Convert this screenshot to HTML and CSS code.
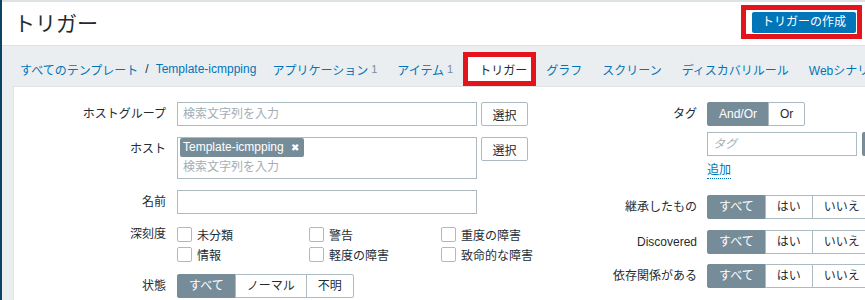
FILE: index.html
```html
<!DOCTYPE html>
<html lang="ja">
  <head>
    <meta charset="UTF-8" />
    <meta name="viewport" content="width=device-width, initial-scale=1.0" />
    <title>トリガー</title>
    <link rel="stylesheet" href="styles.css">
  </head>
  <body>
    <div class="stripe"></div>

    <div class="page">
      <header class="header">
        <h1 class="title">トリガー</h1>
        <div class="mark mark-create">
          <button class="btn-primary">トリガーの作成</button>
        </div>
      </header>

      <nav class="nav">
        <div class="crumbs">
          <a href="#">すべてのテンプレート</a>
          <span class="sep">/</span>
          <a href="#">Template-icmpping</a>
        </div>
        <a class="tab" href="#">アプリケーション <span class="count">1</span></a>
        <a class="tab" href="#">アイテム <span class="count">1</span></a>
        <span class="tab tab-active mark">トリガー</span>
        <a class="tab" href="#">グラフ</a>
        <a class="tab" href="#">スクリーン</a>
        <a class="tab" href="#">ディスカバリルール</a>
        <a class="tab" href="#">Webシナリオ</a>
      </nav>

      <div class="panel">
        <!-- left filter column -->
        <div class="filter-col filter-left">
          <div class="row">
            <label class="row-label">ホストグループ</label>
            <div class="row-field">
              <input class="text-input" type="text" placeholder="検索文字列を入力">
              <button class="btn-alt">選択</button>
            </div>
          </div>

          <div class="row row-gap-11">
            <label class="row-label">ホスト</label>
            <div class="row-field">
              <div class="multiselect">
                <span class="chip">Template-icmpping <span class="chip-x">✖</span></span>
                <span class="ms-placeholder">検索文字列を入力</span>
              </div>
              <button class="btn-alt">選択</button>
            </div>
          </div>

          <div class="row row-gap-11">
            <label class="row-label">名前</label>
            <div class="row-field">
              <input class="text-input" type="text">
            </div>
          </div>

          <div class="row row-gap-10">
            <label class="row-label row-label-short">深刻度</label>
            <div class="checks">
              <label class="check"><span class="box"></span>未分類</label>
              <label class="check"><span class="box"></span>警告</label>
              <label class="check"><span class="box"></span>重度の障害</label>
              <label class="check"><span class="box"></span>情報</label>
              <label class="check"><span class="box"></span>軽度の障害</label>
              <label class="check"><span class="box"></span>致命的な障害</label>
            </div>
          </div>

          <div class="row row-gap-10">
            <label class="row-label">状態</label>
            <div class="seg">
              <span class="seg-item selected">すべて</span>
              <span class="seg-item">ノーマル</span>
              <span class="seg-item">不明</span>
            </div>
          </div>
        </div>

        <!-- right filter column -->
        <div class="filter-col filter-right">
          <div class="row">
            <label class="row-label">タグ</label>
            <div class="seg">
              <span class="seg-item selected">And/Or</span>
              <span class="seg-item">Or</span>
            </div>
          </div>

          <div class="row row-gap-6">
            <span class="row-label"></span>
            <div class="row-field">
              <input class="text-input tag-input" type="text" placeholder="タグ">
              <span class="tag-op"></span>
            </div>
          </div>

          <div class="row row-gap-6">
            <span class="row-label row-label-link"></span>
            <a class="link-add" href="#">追加</a>
          </div>

          <div class="row row-gap-16">
            <label class="row-label">継承したもの</label>
            <div class="seg">
              <span class="seg-item selected">すべて</span>
              <span class="seg-item">はい</span>
              <span class="seg-item">いいえ</span>
            </div>
          </div>

          <div class="row row-gap-11">
            <label class="row-label">Discovered</label>
            <div class="seg">
              <span class="seg-item selected">すべて</span>
              <span class="seg-item">はい</span>
              <span class="seg-item">いいえ</span>
            </div>
          </div>

          <div class="row row-gap-10">
            <label class="row-label">依存関係がある</label>
            <div class="seg">
              <span class="seg-item selected">すべて</span>
              <span class="seg-item">はい</span>
              <span class="seg-item">いいえ</span>
            </div>
          </div>
        </div>
      </div>
    </div>
  </body>
</html>
```

FILE: styles.css
```css
/* Global Styles */
body {
  margin: 0;
  display: flex;
  height: 300px;
  overflow: hidden;
  font-family: "Liberation Sans", "Noto Sans CJK JP", sans-serif;
  font-size: 12px;
  color: #1f2c33;
  background-color: #ebeef0;
}

a {
  color: #0275b8;
  text-decoration: none;
}

.stripe {
  width: 2px;
  flex-shrink: 0;
  background-color: #0c4264;
}

.page {
  flex: 1;
  min-width: 0;
  border-top: 2px solid #dde2e5;
  overflow: hidden;
}

/* Header */
.header {
  height: 43px;
  display: flex;
  justify-content: space-between;
  align-items: center;
  padding: 0 3px 0 12px;
  background-color: #fff;
  border-bottom: 1px solid #dfe4e7;
}

.title {
  margin: 0;
  font-size: 21px;
  font-weight: normal;
  line-height: 24px;
}

/* red highlight boxes */
.mark {
  border: 5px solid #e3141c;
}

.mark-create {
  align-self: flex-start;
  margin-top: 3px;
  padding: 2px 1px 1px 6px;
  background-color: #fff;
  display: flex;
}

.btn-primary {
  width: 104px;
  height: 21px;
  padding: 0;
  border: none;
  border-radius: 2px;
  background-color: #0275b8;
  color: #fff;
  font-family: inherit;
  font-size: 12px;
  line-height: 21px;
}

/* Navigation */
.nav {
  height: 40px;
  box-sizing: border-box;
  padding: 6px 0 0 18px;
  display: flex;
  white-space: nowrap;
}

.crumbs {
  display: flex;
  align-items: center;
  margin-right: 6px;
}

.crumbs .sep {
  margin: 0 7px;
  color: #1f2c33;
}

.tab {
  display: flex;
  align-items: center;
  padding: 0 10px;
}

.tab .count {
  margin-left: 3px;
  font-size: 11px;
  color: #768d99;
}

.tab-active {
  padding: 0 4px 0 11px;
  background-color: #fff;
  color: #1f2c33;
}

/* Filter panel */
.panel {
  margin-left: 11px;
  height: 220px;
  padding-top: 15px;
  box-sizing: border-box;
  background-color: #fff;
  border-top: 1px solid #dfe4e7;
  border-left: 1px solid #dfe4e7;
  display: flex;
  white-space: nowrap;
}

.filter-left {
  width: 566px;
  flex-shrink: 0;
}

.filter-right {
  flex-shrink: 0;
}

.row {
  display: flex;
  align-items: flex-start;
}

.row-gap-6 {
  margin-top: 6px;
}

.row-gap-10 {
  margin-top: 10px;
}

.row-gap-11 {
  margin-top: 11px;
}

.row-gap-16 {
  margin-top: 16px;
}

.row-label {
  width: 152px;
  margin-right: 11px;
  text-align: right;
  line-height: 24px;
  flex-shrink: 0;
}

.filter-right .row-label {
  width: 117px;
  margin-right: 10px;
}

.row-label-short {
  line-height: 20px;
}

.row-field {
  display: flex;
  align-items: flex-start;
}

.text-input {
  width: 300px;
  height: 24px;
  box-sizing: border-box;
  margin: 0;
  padding: 0 5px;
  border: 1px solid #acbbc2;
  font-family: inherit;
  font-size: 12px;
  color: #1f2c33;
}

.text-input::placeholder {
  color: #a3aeb4;
}

.tag-input {
  width: 150px;
}

.tag-input::placeholder {
  font-style: italic;
}

.tag-op {
  width: 60px;
  height: 24px;
  margin-left: 5px;
  border-radius: 2px;
  background-color: #768d99;
}

.btn-alt {
  height: 24px;
  width: 47px;
  margin-left: 4px;
  padding: 0;
  border: 1px solid #acbbc2;
  border-radius: 2px;
  background-color: #fff;
  font-family: inherit;
  font-size: 12px;
  color: #1f2c33;
}

.multiselect {
  width: 300px;
  height: 42px;
  box-sizing: border-box;
  border: 1px solid #acbbc2;
  padding: 0 0 0 2px;
  display: flex;
  flex-direction: column;
  align-items: flex-start;
}

.chip {
  height: 19px;
  line-height: 19px;
  padding: 0 5px 0 3px;
  border-radius: 2px;
  background-color: #768d99;
  color: #fff;
}

.chip-x {
  margin-left: 4px;
  font-size: 10px;
}

.ms-placeholder {
  padding-left: 3px;
  line-height: 21px;
  color: #a3aeb4;
}

/* severity checkboxes */
.checks {
  display: grid;
  grid-template-columns: repeat(3, 132px);
  grid-auto-rows: 20px;
}

.check {
  display: flex;
  align-items: center;
}

.check .box {
  width: 15px;
  height: 15px;
  box-sizing: border-box;
  margin-right: 5px;
  border: 1px solid #acbbc2;
  border-radius: 2px;
}

/* segmented radio */
.seg {
  display: flex;
}

.seg-item {
  height: 24px;
  box-sizing: border-box;
  padding: 0 11px;
  line-height: 22px;
  border: 1px solid #acbbc2;
  margin-left: -1px;
}

.seg-item:first-child {
  margin-left: 0;
  border-radius: 2px 0 0 2px;
}

.seg-item:last-child {
  border-radius: 0 2px 2px 0;
}

.seg-item.selected {
  background-color: #768d99;
  border-color: #768d99;
  color: #fff;
}

.link-add {
  line-height: 16px;
  border-bottom: 1px dotted #0275b8;
}
```
